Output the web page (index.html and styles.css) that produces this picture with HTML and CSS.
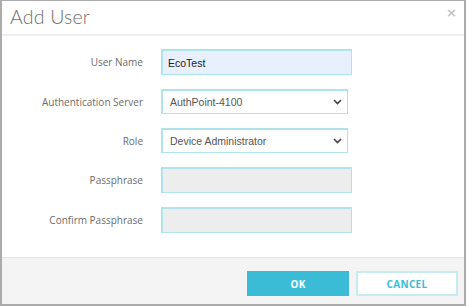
FILE: index.html
```html
<!DOCTYPE html>
<html lang="en">
<head>
	<meta charset="UTF-8" />
	<title>Add User</title>
	<link rel="stylesheet" href="styles.css">
</head>
<body>
	<div class="dialog">
		<div class="header">
			<h1 class="title">Add User</h1>
			<span class="close">&times;</span>
		</div>
		<div class="body">
			<form class="form">
				<label class="label" for="user">User Name</label>
				<input class="field filled" id="user" type="text" value="EcoTest">

				<label class="label" for="auth">Authentication Server</label>
				<div class="select-wrap">
					<select class="field select" id="auth">
						<option>AuthPoint-4100</option>
					</select>
					<svg class="chevron" width="9" height="6" viewBox="0 0 9 6"><path d="M1 1l3.5 3.5L8 1" fill="none" stroke="#444" stroke-width="1.6"/></svg>
				</div>

				<label class="label" for="role">Role</label>
				<div class="select-wrap">
					<select class="field select" id="role">
						<option>Device Administrator</option>
					</select>
					<svg class="chevron" width="9" height="6" viewBox="0 0 9 6"><path d="M1 1l3.5 3.5L8 1" fill="none" stroke="#444" stroke-width="1.6"/></svg>
				</div>

				<label class="label" for="pass">Passphrase</label>
				<input class="field disabled" id="pass" type="password" disabled>

				<label class="label" for="pass2">Confirm Passphrase</label>
				<input class="field disabled" id="pass2" type="password" disabled>
			</form>
		</div>
		<div class="footer">
			<button class="btn btn-ok">OK</button>
			<button class="btn btn-cancel">CANCEL</button>
		</div>
	</div>
</body>
</html>
```

FILE: styles.css
```css
html,body{
	margin:0;
	padding:0;
}
.dialog{
	width:466px;
	height:306px;
	box-sizing:border-box;
	border:2px solid #ababab;
	border-top-width:1px;
	display:flex;
	flex-direction:column;
	background:#fff;
	font-family:"Open Sans",sans-serif;
}
.header{
	height:33px;
	border-bottom:2px solid #f0f0f0;
	display:flex;
	align-items:flex-start;
	justify-content:space-between;
}
.title{
	margin:0;
	padding:4px 0 0 8px;
	font-family:Lato,sans-serif;
	font-weight:300;
	font-size:19.5px;
	color:#6f6f6f;
	letter-spacing:0.2px;
}
.close{
	font-family:"DejaVu Sans",sans-serif;
	font-weight:bold;
	font-size:13px;
	color:#c4c4c4;
	padding:4px 7px 0 0;
	line-height:16px;
}
.body{
	flex:1;
	padding-top:13px;
}
.form{
	display:grid;
	grid-template-columns:141px auto;
	column-gap:18px;
	row-gap:14px;
	align-items:center;
	margin:0;
}
.label{
	text-align:right;
	font-size:10px;
	color:#6c6c6c;
}
.field{
	box-sizing:border-box;
	height:26px;
	width:191px;
	margin:0;
	border:1px solid #aee3ec;
	border-width:2px 1px 1px 2px;
	padding:0 5px;
	font-family:"Liberation Sans",Arial,sans-serif;
	font-size:10.5px;
	color:#222;
	background:#fff;
	outline:none;
}
.filled{
	background:#e9f0fd;
}
.disabled{
	background:#ededed;
}
.select-wrap{
	position:relative;
	width:187px;
	height:25px;
}
.select{
	-webkit-appearance:none;
	appearance:none;
	width:187px;
	height:25px;
	padding-left:7px;
	color:#555;
}
.chevron{
	position:absolute;
	right:6px;
	top:10px;
	pointer-events:none;
}
.footer{
	border-top:1px solid #e2e2e2;
	background:#f4f4f4;
	display:flex;
	justify-content:flex-end;
	gap:7px;
	padding:13px 6px 8px 0;
}
.btn{
	width:102px;
	height:25px;
	box-sizing:border-box;
	font-family:"Open Sans",sans-serif;
	font-weight:bold;
	font-size:10px;
	letter-spacing:0.3px;
	cursor:pointer;
}
.btn-ok{
	background:#3bbcd6;
	border:1px solid #3bbcd6;
	color:#fff;
}
.btn-cancel{
	background:#fff;
	border:2px solid #c6ecf2;
	color:#3bbcd6;
}
```
